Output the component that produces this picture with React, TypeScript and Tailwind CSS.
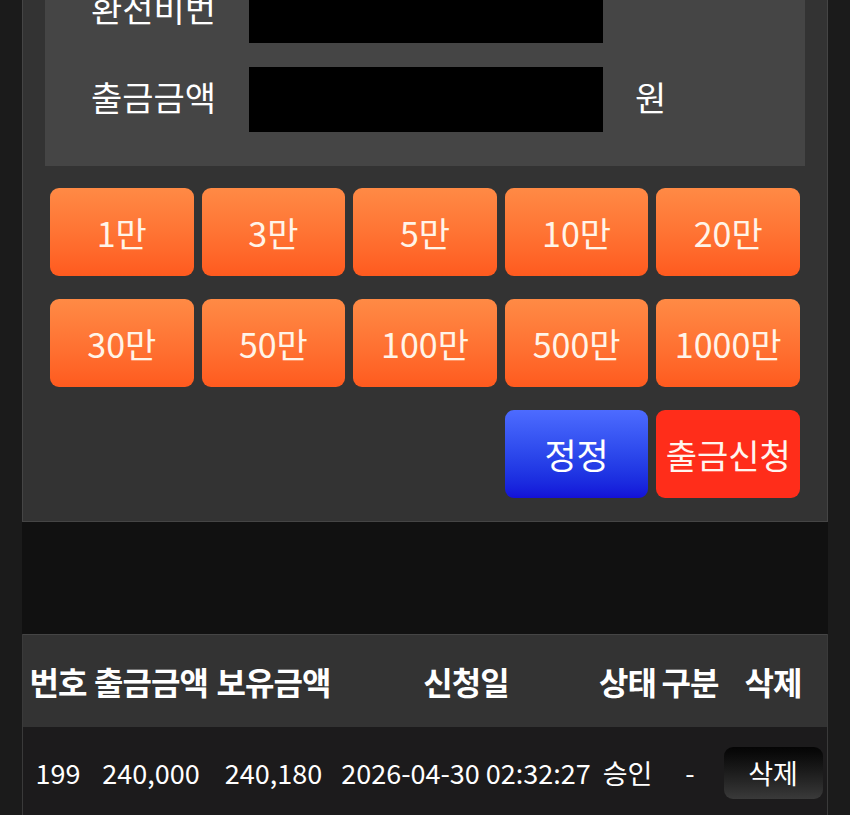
import React from "react";

const amounts = ["1만", "3만", "5만", "10만", "20만", "30만", "50만", "100만", "500만", "1000만"];

const font = { fontFamily: '"Noto Sans CJK KR", "Noto Sans", sans-serif' };

export default function App() {
  return (
    <div className="min-h-[815px] h-[815px] overflow-hidden bg-[#1b1b1b] px-[22px]" style={font}>
      <div className="w-[806px]">
        {/* Withdraw form */}
        <div className="border-x border-b border-[#454545] bg-[#333333]">
          <div className="mx-[22px] bg-[#454545] pl-[46px] pb-[34px] text-white">
            <div className="-mt-[22px] flex items-center">
              <span className="w-[124px] whitespace-nowrap text-[34px] leading-none -mt-[6px]">환전비번</span>
              <div className="ml-[34px] h-[65px] w-[354px] bg-black" />
            </div>
            <div className="mt-[24px] flex items-center">
              <span className="w-[124px] whitespace-nowrap text-[34px] leading-none -mt-[6px]">출금금액</span>
              <div className="ml-[34px] h-[65px] w-[354px] bg-black" />
              <span className="ml-[32px] text-[34px] leading-none -mt-[6px]">원</span>
            </div>
          </div>

          <div className="grid grid-cols-5 gap-x-[8px] gap-y-[23px] px-[27px] pt-[22px] pb-[23px]">
            {amounts.map((a) => (
              <button
                key={a}
                className="flex h-[88px] items-center justify-center rounded-[9px] bg-gradient-to-b from-[#ff8a45] to-[#ff5a1e] text-[34px] text-[#fff4e8]"
              >
                {a}
              </button>
            ))}
            <button className="col-start-4 flex h-[88px] items-center justify-center rounded-[9px] bg-gradient-to-b from-[#4d6bff] to-[#1410d8] text-[35px] text-white">
              정정
            </button>
            <button className="flex h-[88px] items-center justify-center rounded-[9px] bg-[#ff2d1a] text-[34px] whitespace-nowrap text-[#fff4ee]">
              출금신청
            </button>
          </div>
        </div>

        <div className="h-[112px] bg-[#111111]" />

        {/* History table */}
        <div className="border-x border-[#3a3a3a]">
          <div className="flex h-[93px] items-center whitespace-nowrap border-t border-[#454545] bg-[#333333] text-[32px] font-bold tracking-[-1px] text-white">
            <div className="flex w-[70px] justify-center">번호</div>
            <div className="flex w-[116px] justify-center">출금금액</div>
            <div className="flex w-[129px] justify-center">보유금액</div>
            <div className="flex w-[256px] justify-center">신청일</div>
            <div className="flex w-[67px] justify-center">상태</div>
            <div className="flex w-[58px] justify-center">구분</div>
            <div className="flex w-[108px] justify-center">삭제</div>
          </div>
          <div className="flex h-[100px] items-start whitespace-nowrap bg-[#1c1b1c] pt-[20px] text-[27px] text-white">
            <div className="flex h-[52px] w-[70px] items-center justify-center">199</div>
            <div className="flex h-[52px] w-[116px] items-center justify-center">240,000</div>
            <div className="flex h-[52px] w-[129px] items-center justify-center">240,180</div>
            <div className="flex h-[52px] w-[256px] items-center justify-center">2026-04-30 02:32:27</div>
            <div className="flex h-[52px] w-[67px] items-center justify-center">승인</div>
            <div className="flex h-[52px] w-[58px] items-center justify-center">-</div>
            <div className="flex w-[108px] justify-center">
              <button className="flex h-[52px] w-[99px] items-center justify-center rounded-[9px] bg-gradient-to-b from-[#050505] to-[#3a3a3a] text-[27px] text-white">
                삭제
              </button>
            </div>
          </div>
        </div>
      </div>
    </div>
  );
}
